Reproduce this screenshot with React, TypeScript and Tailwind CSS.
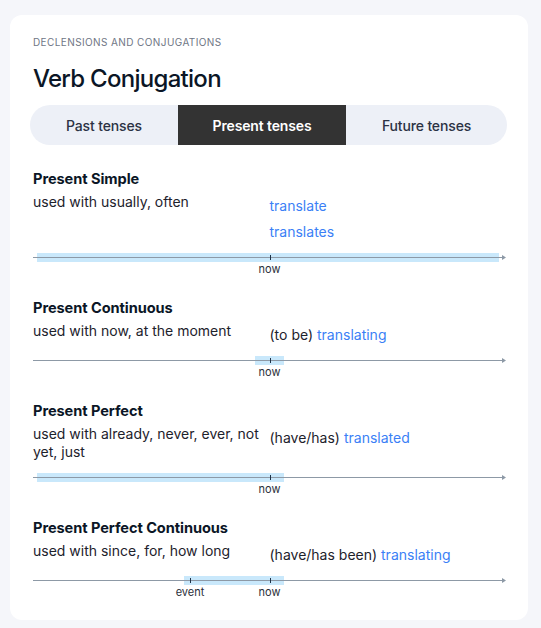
import React from "react";

type Tick = { pos: string; label: string };

interface TenseProps {
  title: string;
  usage: string;
  forms: React.ReactNode[];
  bar: string;
  ticks: Tick[];
  first?: boolean;
}

const tabs = [
  { label: "Past tenses", active: false, cls: "rounded-l-full" },
  { label: "Present tenses", active: true, cls: "" },
  { label: "Future tenses", active: false, cls: "rounded-r-full" },
];

function Timeline({ bar, ticks }: { bar: string; ticks: Tick[] }) {
  return (
    <div className="relative mt-[12px] h-[23px]">
      <div className={`absolute top-0 h-[9px] bg-[#c9e8fb] ${bar}`} />
      <div className="absolute left-0 right-[3px] top-[4px] h-px bg-[#8d99a6]" />
      <svg className="absolute right-0 top-[2px]" width="4" height="5" viewBox="0 0 4 5">
        <path d="M0 0 L4 2.5 L0 5 Z" fill="#8d99a6" />
      </svg>
      {ticks.map((t) => (
        <React.Fragment key={t.label}>
          <div className={`absolute top-[2px] h-[5px] w-px bg-[#1f3347] ${t.pos}`} />
          <span
            className={`absolute top-[9px] -translate-x-1/2 text-[11px] leading-[14px] text-[#2a2f3a] ${t.pos}`}
          >
            {t.label}
          </span>
        </React.Fragment>
      ))}
    </div>
  );
}

function Tense({ title, usage, forms, bar, ticks, first }: TenseProps) {
  return (
    <section className={first ? "mt-[24px]" : "mt-[22px]"}>
      <h3 className="text-[14.6px] font-bold leading-[20px] tracking-[-0.005em] text-[#0b1626]">{title}</h3>
      <div className="mt-[4px] grid grid-cols-2">
        <p className="text-[14px] leading-[18px] text-[#1d222c]">{usage}</p>
        <div className="flex flex-col gap-[8px] pt-[4px] text-[14px] leading-[18px] text-[#1d222c]">
          {forms.map((f, i) => (
            <div key={i}>{f}</div>
          ))}
        </div>
      </div>
      <Timeline bar={bar} ticks={ticks} />
    </section>
  );
}

const Blue = ({ children }: { children: React.ReactNode }) => (
  <span className="text-[#3b7ff6]">{children}</span>
);

export default function App() {
  return (
    <div
      className="min-h-screen bg-[#f5f6fa] pl-[10px] pt-[15px]"
      style={{ fontFamily: "Inter, 'Noto Sans', sans-serif" }}
    >
      <div className="w-[518px] rounded-[12px] bg-white pb-[21px] pl-[23px] pr-[22px] pt-[20px]">
        <div className="text-[10px] uppercase leading-[14px] tracking-[0.04em] text-[#6f7685]">
          Declensions and conjugations
        </div>
        <h2 className="mt-[14px] text-[24px] font-medium leading-[32px] tracking-[-0.03em] text-[#0b1626]">
          Verb Conjugation
        </h2>

        <div className="-ml-[3px] -mr-px mt-[10px] grid h-[40px] grid-cols-[148px_168px_1fr] text-[14px] tracking-[-0.01em]">
          {tabs.map((t) => (
            <button
              key={t.label}
              className={`flex items-center justify-center ${t.cls} ${
                t.active
                  ? "bg-[#333333] font-semibold text-white"
                  : "bg-[#edf0f7] font-medium text-[#2b3244]"
              }`}
            >
              {t.label}
            </button>
          ))}
        </div>

        <Tense
          first
          title="Present Simple"
          usage="used with usually, often"
          forms={[<Blue>translate</Blue>, <Blue>translates</Blue>]}
          bar="left-[4px] right-[7px]"
          ticks={[{ pos: "left-1/2", label: "now" }]}
        />
        <Tense
          title="Present Continuous"
          usage="used with now, at the moment"
          forms={[
            <>
              (to be) <Blue>translating</Blue>
            </>,
          ]}
          bar="left-[calc(50%-15px)] w-[29px]"
          ticks={[{ pos: "left-1/2", label: "now" }]}
        />
        <Tense
          title="Present Perfect"
          usage="used with already, never, ever, not yet, just"
          forms={[
            <>
              (have/has) <Blue>translated</Blue>
            </>,
          ]}
          bar="left-[4px] right-[calc(50%-14px)]"
          ticks={[{ pos: "left-1/2", label: "now" }]}
        />
        <Tense
          title="Present Perfect Continuous"
          usage="used with since, for, how long"
          forms={[
            <>
              (have/has been) <Blue>translating</Blue>
            </>,
          ]}
          bar="left-[151px] right-[calc(50%-14px)]"
          ticks={[
            { pos: "left-[157px]", label: "event" },
            { pos: "left-1/2", label: "now" },
          ]}
        />
      </div>
    </div>
  );
}
